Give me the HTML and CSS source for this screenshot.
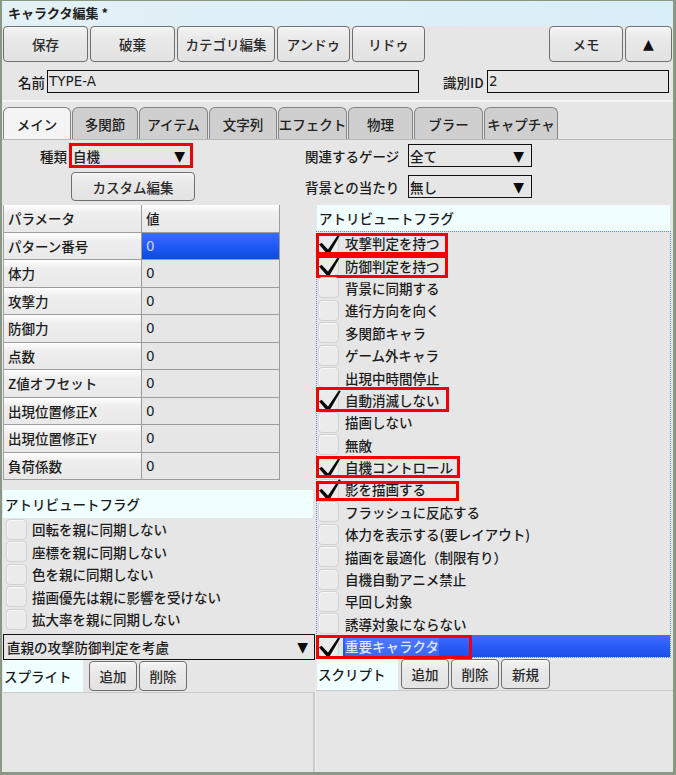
FILE: index.html
```html
<!DOCTYPE html>
<html lang="ja">
<head>
<meta charset="utf-8">
<title>キャラクタ編集</title>
<link rel="stylesheet" href="styles.css">
</head>
<body>
<div class="window">
  <div class="titlebar">キャラクタ編集 *</div>
  <div class="toolbar">
    <button class="btn b-save">保存</button>
    <button class="btn b-discard">破棄</button>
    <button class="btn b-cat">カテゴリ編集</button>
    <button class="btn b-undo">アンドゥ</button>
    <button class="btn b-redo">リドゥ</button>
    <div class="spacer"></div>
    <button class="btn b-memo">メモ</button>
    <button class="btn b-up">▲</button>
  </div>
  <div class="namerow">
    <span class="lbl lbl-name">名前</span>
    <div class="field f-name">TYPE-A</div>
    <span class="lbl lbl-id">識別ID</span>
    <div class="field f-id">2</div>
  </div>
  <div class="sep"></div>
  <div class="tabs">
    <div class="tab active t1">メイン</div>
    <div class="tab t2">多関節</div>
    <div class="tab t3">アイテム</div>
    <div class="tab t4">文字列</div>
    <div class="tab t5">エフェクト</div>
    <div class="tab t6">物理</div>
    <div class="tab t7">ブラー</div>
    <div class="tab t8">キャプチャ</div>
  </div>
  <div class="panel">
    <div class="form">
      <div class="form-left">
        <div class="frow r1">
          <span class="flabel">種類</span>
          <div class="select sel-kind"><span>自機</span><span class="arrow">▼</span></div>
        </div>
        <div class="frow r2">
          <button class="btn b-custom">カスタム編集</button>
        </div>
      </div>
      <div class="form-right">
        <div class="frow r1">
          <span class="rlabel">関連するゲージ</span>
          <div class="select sel-r"><span>全て</span><span class="arrow">▼</span></div>
        </div>
        <div class="frow r2">
          <span class="rlabel">背景との当たり</span>
          <div class="select sel-r"><span>無し</span><span class="arrow">▼</span></div>
        </div>
      </div>
    </div>
    <div class="cols">
      <div class="col-left">
        <div class="ptable">
          <div class="pc pk">パラメータ</div><div class="pc pk">値</div>
          <div class="pc pk">パターン番号</div><div class="pc pv sel">0</div>
          <div class="pc pk">体力</div><div class="pc pv">0</div>
          <div class="pc pk">攻撃力</div><div class="pc pv">0</div>
          <div class="pc pk">防御力</div><div class="pc pv">0</div>
          <div class="pc pk">点数</div><div class="pc pv">0</div>
          <div class="pc pk">Z値オフセット</div><div class="pc pv">0</div>
          <div class="pc pk">出現位置修正X</div><div class="pc pv">0</div>
          <div class="pc pk">出現位置修正Y</div><div class="pc pv">0</div>
          <div class="pc pk">負荷係数</div><div class="pc pv">0</div>
        </div>
        <div class="band band-left">アトリビュートフラグ</div>
        <div class="checks-left">
          <div class="citem"><span class="cbox"></span><span class="ctext">回転を親に同期しない</span></div>
          <div class="citem"><span class="cbox"></span><span class="ctext">座標を親に同期しない</span></div>
          <div class="citem"><span class="cbox"></span><span class="ctext">色を親に同期しない</span></div>
          <div class="citem"><span class="cbox"></span><span class="ctext">描画優先は親に影響を受けない</span></div>
          <div class="citem"><span class="cbox"></span><span class="ctext">拡大率を親に同期しない</span></div>
        </div>
        <div class="select sel-wide"><span>直親の攻撃防御判定を考慮</span><span class="arrow">▼</span></div>
        <div class="subrow sub-left">
          <span class="sublabel">スプライト</span>
          <button class="btn sbtn">追加</button>
          <button class="btn sbtn">削除</button>
        </div>
        <div class="emptybox eb-left"></div>
      </div>
      <div class="col-right">
        <div class="band band-right">アトリビュートフラグ</div>
        <div class="flaglist">
          <div class="fitem"><span class="cbox"></span><svg class="tick" viewBox="0 0 24 24"><path d="M2 12.5 L4.6 10.8 L11 17.6 L22 1.2 L23.7 2.3 L12.4 21.8 L10 21.8 Z"/></svg><span class="ftext">攻撃判定を持つ</span><span class="hl hl-1"></span></div>
          <div class="fitem"><span class="cbox"></span><svg class="tick" viewBox="0 0 24 24"><path d="M2 12.5 L4.6 10.8 L11 17.6 L22 1.2 L23.7 2.3 L12.4 21.8 L10 21.8 Z"/></svg><span class="ftext">防御判定を持つ</span><span class="hl hl-2"></span></div>
          <div class="fitem"><span class="cbox"></span><span class="ftext">背景に同期する</span></div>
          <div class="fitem"><span class="cbox"></span><span class="ftext">進行方向を向く</span></div>
          <div class="fitem"><span class="cbox"></span><span class="ftext">多関節キャラ</span></div>
          <div class="fitem"><span class="cbox"></span><span class="ftext">ゲーム外キャラ</span></div>
          <div class="fitem"><span class="cbox"></span><span class="ftext">出現中時間停止</span></div>
          <div class="fitem"><span class="cbox"></span><svg class="tick" viewBox="0 0 24 24"><path d="M2 12.5 L4.6 10.8 L11 17.6 L22 1.2 L23.7 2.3 L12.4 21.8 L10 21.8 Z"/></svg><span class="ftext">自動消滅しない</span><span class="hl hl-3"></span></div>
          <div class="fitem"><span class="cbox"></span><span class="ftext">描画しない</span></div>
          <div class="fitem"><span class="cbox"></span><span class="ftext">無敵</span></div>
          <div class="fitem"><span class="cbox"></span><svg class="tick" viewBox="0 0 24 24"><path d="M2 12.5 L4.6 10.8 L11 17.6 L22 1.2 L23.7 2.3 L12.4 21.8 L10 21.8 Z"/></svg><span class="ftext">自機コントロール</span><span class="hl hl-4"></span></div>
          <div class="fitem"><span class="cbox"></span><svg class="tick" viewBox="0 0 24 24"><path d="M2 12.5 L4.6 10.8 L11 17.6 L22 1.2 L23.7 2.3 L12.4 21.8 L10 21.8 Z"/></svg><span class="ftext">影を描画する</span><span class="hl hl-5"></span></div>
          <div class="fitem"><span class="cbox"></span><span class="ftext">フラッシュに反応する</span></div>
          <div class="fitem"><span class="cbox"></span><span class="ftext">体力を表示する(要レイアウト)</span></div>
          <div class="fitem"><span class="cbox"></span><span class="ftext">描画を最適化（制限有り）</span></div>
          <div class="fitem"><span class="cbox"></span><span class="ftext">自機自動アニメ禁止</span></div>
          <div class="fitem"><span class="cbox"></span><span class="ftext">早回し対象</span></div>
          <div class="fitem"><span class="cbox"></span><span class="ftext">誘導対象にならない</span></div>
          <div class="fitem selected"><span class="cbox"></span><svg class="tick" viewBox="0 0 24 24"><path d="M2 12.5 L4.6 10.8 L11 17.6 L22 1.2 L23.7 2.3 L12.4 21.8 L10 21.8 Z"/></svg><span class="ftext"><span class="seltext">重要キャラクタ</span></span><span class="hl hl-6"></span></div>
        </div>
        <div class="subrow sub-right">
          <span class="sublabel">スクリプト</span>
          <button class="btn sbtn">追加</button>
          <button class="btn sbtn">削除</button>
          <button class="btn sbtn wide">新規</button>
        </div>
        <div class="emptybox eb-right"></div>
      </div>
    </div>
  </div>
</div>
</body>
</html>
```

FILE: styles.css
```css
* { box-sizing: border-box; }
html, body { margin: 0; padding: 0; }
body {
  font-family: "DejaVu Sans", "Noto Sans CJK JP", sans-serif;
  font-size: 13.5px;
  font-weight: 500;
  color: #1c1c1c;
  background: #e6e6e6;
}
.window {
  width: 676px;
  height: 775px;
  border-style: solid;
  border-color: #8b9785;
  border-width: 1px 3px 3px 2px;
  background: #e6e6e6;
  display: flex;
  flex-direction: column;
  overflow: hidden;
}
.titlebar {
  height: 25px;
  flex: none;
  background: linear-gradient(90deg, #e4f1f7, #d8eef8);
  font-family: "Noto Sans CJK JP", sans-serif;
  font-weight: bold;
  font-size: 13px;
  line-height: 24px;
  padding-left: 6px;
  color: #222;
}
.btn {
  height: 36px;
  border: 1px solid #6f6f6f;
  border-radius: 4px;
  background: linear-gradient(#f3f3f3 0%, #e8e8e8 40%, #e3e3e3 100%);
  font-family: "Noto Sans CJK JP", sans-serif;
  font-size: 13.5px;
  font-weight: 500;
  color: #2a2a2a;
  padding: 0;
  white-space: nowrap;
  box-shadow: inset 0 1px 0 #fafafa;
}
.toolbar {
  flex: none;
  display: flex;
  height: 37px;
  padding-left: 1px;
  padding-right: 1px;
  gap: 2px;
}
.b-save { width: 85px; }
.b-discard { width: 85px; }
.b-cat { width: 98px; }
.b-undo { width: 73px; }
.b-redo { width: 73px; }
.b-memo { width: 74px; }
.b-up { width: 47px; font-family: "DejaVu Sans", sans-serif; font-size: 14px; color: #111; }
.spacer { flex: 1; }

.namerow {
  flex: none;
  display: flex;
  align-items: center;
  height: 37px;
}
.lbl { font-family: "Noto Sans CJK JP", sans-serif; white-space: nowrap; }
.lbl-name { margin-left: 16px; width: 29px; }
.lbl-id { margin-left: 24px; width: 44px; }
.field {
  height: 23px;
  border: 1.5px solid #111;
  background: #e6e6e6;
  line-height: 20px;
  padding-left: 1px;
}
.f-name { width: 372px; }
.f-id { width: 182px; }
.sep {
  flex: none;
  height: 4px;
  border-top: 2px solid #f4f4f4;
}
.tabs {
  flex: none;
  height: 36px;
  display: flex;
  align-items: flex-end;
  gap: 1px;
  padding-left: 1px;
  border-bottom: 1px solid #b8b8b8;
}
.tab {
  height: 32px;
  border: 1px solid #858585;
  border-bottom: none;
  border-radius: 6px 6px 0 0;
  background: #cfcfcf;
  font-family: "Noto Sans CJK JP", sans-serif;
  display: flex;
  align-items: center;
  justify-content: center;
  white-space: nowrap;
  overflow: hidden;
  color: #222;
}
.tab.active { background: #f4f4f4; }
.t1 { width: 68px; }
.t2 { width: 66px; }
.t3 { width: 69px; }
.t4 { width: 68px; }
.t5 { width: 69px; }
.t6 { width: 65px; }
.t7 { width: 69px; }
.t8 { width: 74px; }

.panel {
  flex: 1;
  display: flex;
  flex-direction: column;
  min-height: 0;
}
.form {
  flex: none;
  height: 65px;
  display: flex;
  padding-top: 3px;
}
.form-left { width: 300px; display: flex; flex-direction: column; gap: 4px; }
.form-right { flex: 1; display: flex; flex-direction: column; gap: 4px; }
.frow { display: flex; align-items: center; }
.frow.r1 { height: 25px; }
.frow.r2 { height: 29px; }
.flabel {
  width: 65px;
  text-align: right;
  margin-right: 2px;
  font-family: "Noto Sans CJK JP", sans-serif;
}
.rlabel {
  width: 106px;
  padding-left: 3px;
  font-family: "Noto Sans CJK JP", sans-serif;
  white-space: nowrap;
}
.select {
  display: flex;
  align-items: center;
  justify-content: space-between;
  background: #e6e6e6;
  font-family: "Noto Sans CJK JP", sans-serif;
  white-space: nowrap;
}
.select .arrow {
  font-family: "DejaVu Sans", sans-serif;
  font-size: 14px;
  color: #0c0c0c;
}
.sel-kind {
  width: 124px;
  height: 25px;
  border: 3px solid #f40000;
  padding: 0 5px 0 1px;
}
.sel-r {
  width: 124px;
  height: 23px;
  border: 1.5px solid #111;
  padding: 0 7px 0 1px;
}
.b-custom { margin-left: 69px; width: 124px; height: 29px; }

.cols {
  flex: 1;
  display: flex;
  min-height: 0;
}
.col-left {
  width: 313px;
  display: flex;
  flex-direction: column;
}
.col-right {
  flex: 1;
  display: flex;
  flex-direction: column;
}
.ptable {
  margin-left: 1px;
  width: 276px;
  display: grid;
  grid-template-columns: 138px 138px;
  grid-auto-rows: 27.5px;
  border-left: 1px solid #a3a3a3;
}
.pc {
  border-right: 1px solid #9c9c9c;
  border-bottom: 1px solid #9c9c9c;
  padding-left: 4px;
  display: flex;
  align-items: center;
  white-space: nowrap;
  overflow: hidden;
}
.pk {
  background: linear-gradient(#ffffff 0%, #eeeeee 30%, #e9e9e9 100%);
  font-family: "Noto Sans CJK JP", sans-serif;
}
.pv { background: #e6e6e6; }
.pv.sel {
  background: linear-gradient(#3a6bff 0%, #2159f6 50%, #0b4bdc 100%);
  color: #c8dbff;
}
.band {
  background: #f0ffff;
  font-family: "Noto Sans CJK JP", sans-serif;
  display: flex;
  align-items: center;
  white-space: nowrap;
}
.band-left {
  margin-top: 10px;
  margin-left: 1px;
  width: 310px;
  height: 28px;
  padding-left: 2px;
}
.band-right {
  margin-left: 2px;
  margin-right: 3px;
  height: 26px;
  padding-left: 2px;
}
.cbox {
  flex: none;
  width: 21px;
  height: 21px;
  border-radius: 4px;
  background: #ebebeb;
  border: 1px solid #d2d2d2;
  box-shadow: inset 1px 1px 0 #f7f7f7;
}
.citem {
  height: 22.5px;
  display: flex;
  align-items: center;
}
.citem .cbox { margin-left: 4px; }
.ctext {
  margin-left: 5px;
  font-family: "Noto Sans CJK JP", sans-serif;
  white-space: nowrap;
}
.sel-wide {
  margin-top: 3.5px;
  margin-left: 1px;
  width: 312px;
  height: 26px;
  border: 1.5px solid #111;
  padding: 0 6px 0 3px;
}
.subrow {
  flex: none;
  height: 32px;
  display: flex;
  align-items: center;
}
.sublabel {
  height: 32px;
  background: #f0ffff;
  font-family: "Noto Sans CJK JP", sans-serif;
  display: flex;
  align-items: center;
  white-space: nowrap;
}
.sbtn { width: 48px; height: 30px; margin-left: 2px; }
.sbtn.wide { width: 49px; }
.sub-left .sublabel { margin-left: 1px; width: 80px; padding-left: 1px; }
.sub-left .sublabel + .sbtn { margin-left: 6px; }
.sub-right { padding-left: 2px; }
.sub-right .sublabel { width: 81px; padding-left: 1px; }
.sub-right .sublabel + .sbtn { margin-left: 3px; }
.emptybox {
  flex: 1;
  border-top: 1px solid #cacaca;
}
.eb-left { border-right: 2px solid #cdcdcd; margin-left: 1px; }
.eb-right { border-left: 1px solid #f0f0f0; }

.flaglist {
  margin-left: 1px;
  margin-right: 2px;
  border: 1px dotted #4a8ff0;
}
.fitem {
  position: relative;
  height: 22.4px;
  display: flex;
  align-items: center;
}
.fitem .cbox { margin-left: 1px; }
.ftext {
  margin-left: 6px;
  font-family: "Noto Sans CJK JP", sans-serif;
  white-space: nowrap;
}
.fitem.selected .ftext {
  flex: 1;
  margin-left: 4px;
  padding-left: 2px;
  height: 22px;
  display: flex;
  align-items: center;
  background: linear-gradient(#3f6fff 0%, #2a5cf8 50%, #1a4fe6 100%);
  color: #dfe7ff;
}
.seltext { background: rgba(120, 150, 255, 0.35); }
.tick {
  position: absolute;
  left: 0;
  top: 0;
  width: 24px;
  height: 24px;
  fill: #0a0a0a;
}
.hl {
  position: absolute;
  left: -1px;
  border: 3px solid #f40000;
  pointer-events: none;
}
.hl-1 { top: 1px; width: 132px; height: 22px; }
.hl-2 { top: 1px; width: 132px; height: 23px; }
.hl-3 { top: -2px; width: 133px; height: 25px; }
.hl-4 { top: 0; width: 144px; height: 22px; }
.hl-5 { top: 3px; width: 143px; height: 20px; }
.hl-6 { top: 0; width: 156px; height: 24px; }
```
